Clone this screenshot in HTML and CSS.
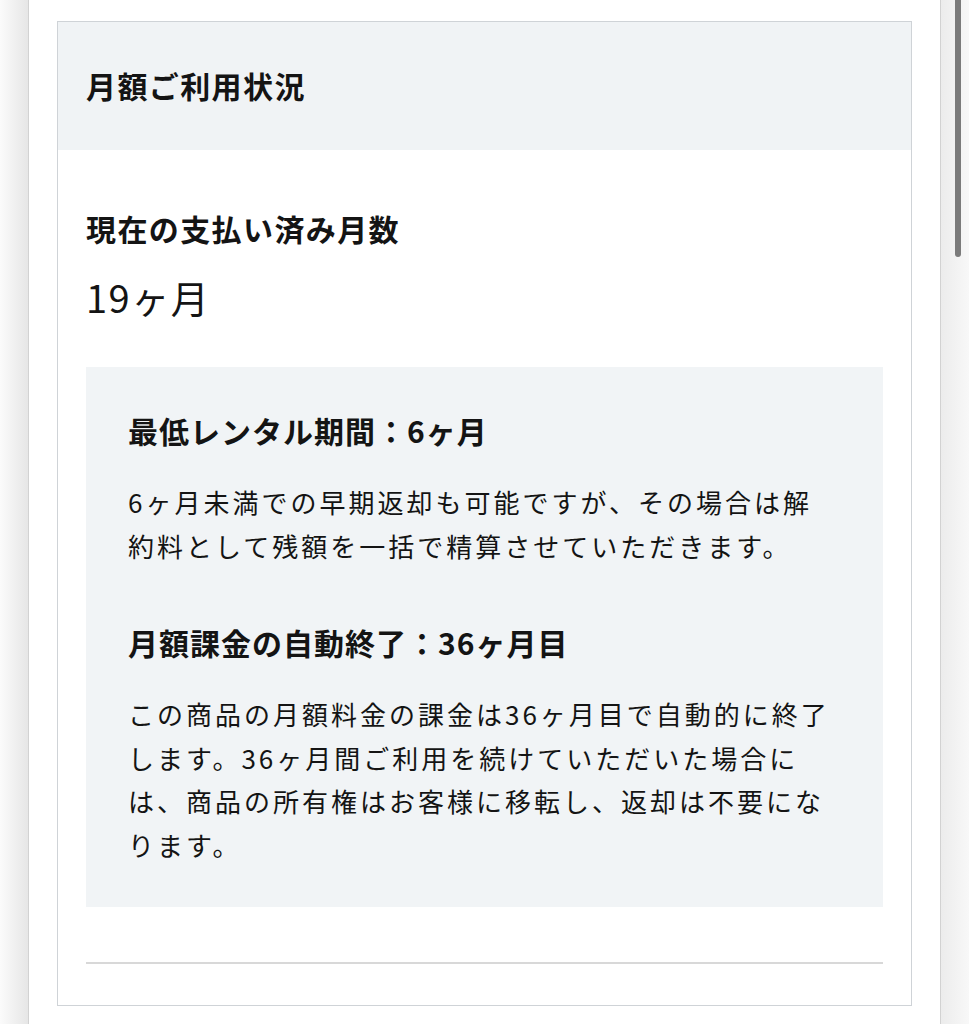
FILE: index.html
```html
<!DOCTYPE html>
<html lang="ja">
<head>
  <meta charset="utf-8">
  <title>月額ご利用状況</title>
  <link rel="stylesheet" href="styles.css">
</head>
<body>
  <div class="side side-left"></div>

  <main class="main">
    <section class="card">
      <h1 class="card-title">月額ご利用状況</h1>

      <div class="card-body">
        <h2 class="label">現在の支払い済み月数</h2>
        <p class="count">19ヶ月</p>

        <div class="notice">
          <h3 class="notice-title">最低レンタル期間：6ヶ月</h3>
          <p class="notice-text">6ヶ月未満での早期返却も可能ですが、その場合は解約料として残額を一括で精算させていただきます。</p>

          <h3 class="notice-title notice-title-next">月額課金の自動終了：36ヶ月目</h3>
          <p class="notice-text">この商品の月額料金の課金は36ヶ月目で自動的に終了します。36ヶ月間ご利用を続けていただいた場合には、商品の所有権はお客様に移転し、返却は不要になります。</p>
        </div>

        <hr class="divider">
      </div>
    </section>
  </main>

  <div class="side side-right">
    <div class="scroll-thumb"></div>
  </div>
</body>
</html>
```

FILE: styles.css
```css
html, body {
  margin: 0;
  height: 100%;
}

body {
  display: flex;
  overflow: hidden;
  background: #fff;
  color: #141414;
  font-family: "Noto Sans CJK JP", "Noto Sans", sans-serif;
}

/* grey panels at either edge */
.side {
  width: 28px;
  flex-shrink: 0;
}

.side-left {
  background: linear-gradient(to right, #fbfbfb, #e6e6e6);
  border-right: 1px solid #d2d2d2;
}

.side-right {
  position: relative;
  width: 28px;
  background: linear-gradient(to right, #ececec, #f8f8f8);
  border-left: 1px solid #d2d2d2;
}

.scroll-thumb {
  position: absolute;
  top: 0;
  right: 8px;
  width: 6px;
  height: 257px;
  border-radius: 0 0 3px 3px;
  background: #7b7b7b;
}

.main {
  flex: 1;
  padding: 21px 28px 0;
}

.card {
  border: 1px solid #cfd3d7;
  background: #fff;
}

.card-title {
  margin: 0;
  padding: 0 28px;
  height: 128px;
  line-height: 126px;
  background: #f0f3f5;
  font-size: 30px;
  font-weight: 700;
  letter-spacing: 1.4px;
}

.card-body {
  padding: 0 28px 41px;
}

.label {
  margin: 56px 0 0;
  font-size: 30px;
  line-height: 44px;
  font-weight: 700;
  letter-spacing: 1.4px;
}

.count {
  margin: 22px 0 0;
  font-size: 38px;
  line-height: 50px;
  letter-spacing: 1.5px;
}

.notice {
  margin-top: 45px;
  padding: 41px 48px 41px 42px;
  background: #f1f4f6;
}

.notice-title {
  margin: 0;
  font-size: 30px;
  line-height: 44px;
  font-weight: 700;
  letter-spacing: 1px;
}

.notice-title-next {
  margin-top: 53px;
}

.notice-text {
  margin: 28px 0 0;
  font-size: 26px;
  line-height: 43.5px;
  letter-spacing: 3px;
}

.divider {
  margin: 55px 0 0;
  border: 0;
  border-top: 2px solid #d8d8d8;
}
```
